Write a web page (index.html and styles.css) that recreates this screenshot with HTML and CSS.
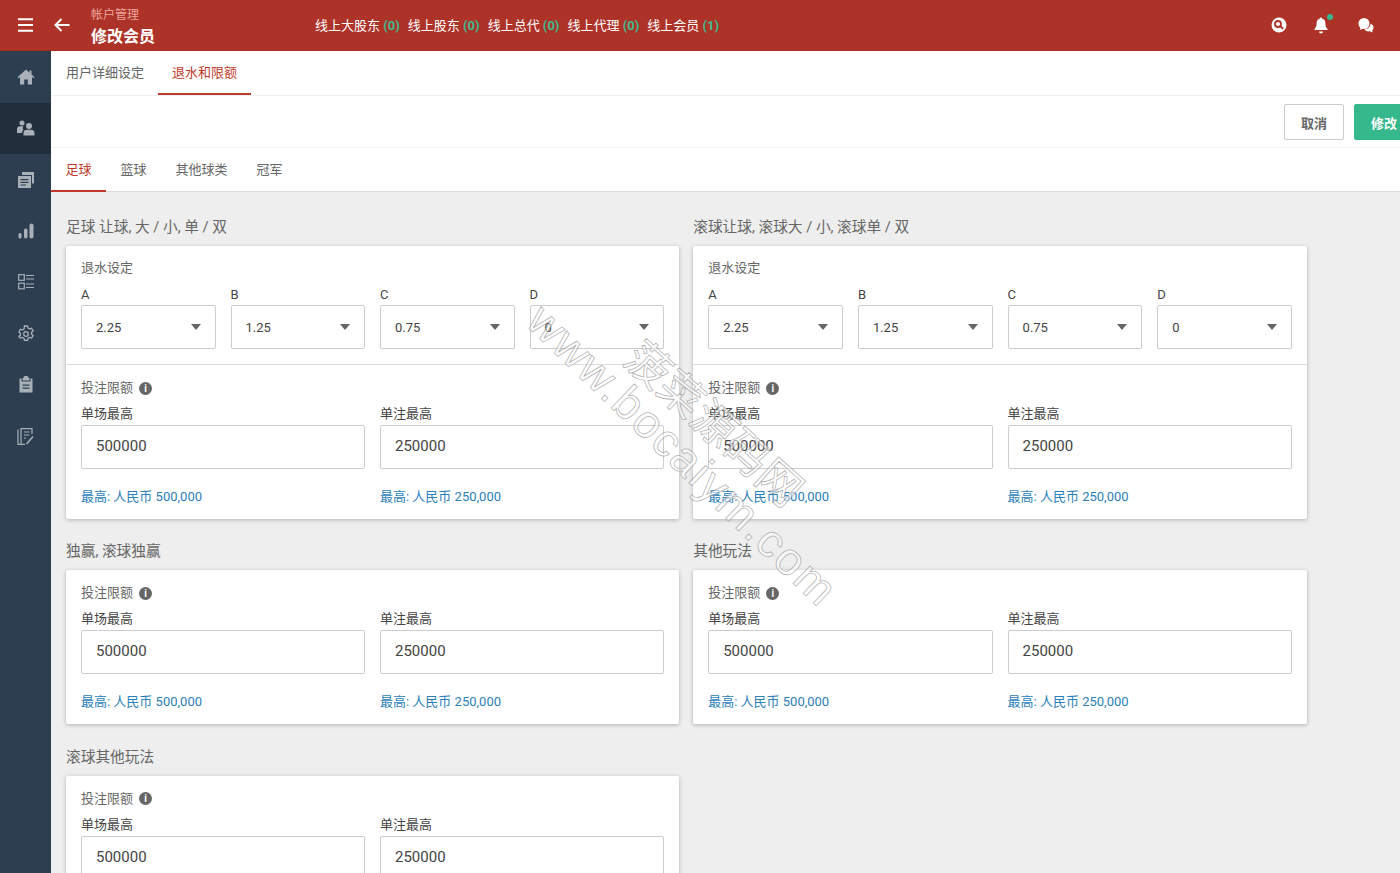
FILE: index.html
```html
<!DOCTYPE html>
<html lang="zh">
<head>
<meta charset="utf-8">
<title>修改会员</title>
<link rel="stylesheet" href="styles.css">
</head>
<body>
<header class="topbar">
  <button class="tb-btn menu" aria-label="menu"><svg width="16" height="14" viewBox="0 0 16 14"><path d="M0 1.2h15M0 7h15M0 12.8h15" stroke="#fff" stroke-width="2"/></svg></button>
  <button class="tb-btn back" aria-label="back"><svg width="16" height="14" viewBox="0 0 16 14"><path d="M15.5 7H2M7.500 1 1.500 7l6 6" stroke="#fff" stroke-width="2" fill="none"/></svg></button>
  <div class="crumb"><div class="crumb-sub">帐户管理</div><div class="crumb-title">修改会员</div></div>
  <nav class="online">
    <span>线上大股东 <b>(0)</b></span><span>线上股东 <b>(0)</b></span><span>线上总代 <b>(0)</b></span><span>线上代理 <b>(0)</b></span><span>线上会员 <b>(1)</b></span>
  </nav>
  <div class="tb-icons">
    <svg width="16" height="16" viewBox="0 0 16 16"><circle cx="8" cy="8" r="7.500" fill="#fff"/><circle cx="7" cy="7" r="3" fill="none" stroke="#ad3228" stroke-width="1.800"/><path d="m9.200 9.200 3 2.600" stroke="#ad3228" stroke-width="2"/></svg>
    <span class="bell"><svg width="14" height="17" viewBox="0 0 14 17"><path d="M7 0.500c.7 0 1 .5 1 1.100 2.500.6 3.400 2.700 3.400 5 0 3 1 4.300 2.100 5.400v.9H.5v-.9c1.100-1.100 2.100-2.400 2.100-5.400 0-2.300.9-4.400 3.400-5 0-.6.300-1.100 1-1.100zM5 14.600h4c0 1.200-.9 1.900-2 1.900s-2-.7-2-1.900z" fill="#fff"/></svg><i class="dot"></i></span>
    <svg class="chat" width="16" height="15" viewBox="0 0 16 15"><circle cx="6" cy="5.500" r="5.500" fill="#fff"/><path d="M2.500 9 2 12l3.500-1.500z" fill="#fff"/><path d="M12.500 5.800c1.900.7 3 2.100 3 3.700 0 1.100-.5 2-1.300 2.700l.5 2.300-2.800-1.200c-2.300.5-4.500-.4-5.400-2.100 3.300.2 6-2.300 6-5.400z" fill="#fff"/></svg>
  </div>
</header>
<div class="shell">
  <aside class="sidebar">
    <a class="side-item"><svg width="18" height="16" viewBox="0 0 18 16"><path d="M9 .5 .5 8.200l1 1L3 8v7.500h4.200v-5h3.600v5H15V8l1.500 1.200 1-1L14.500 5.500V1.500h-2v2.200z"/></svg></a>
    <a class="side-item on"><svg width="18" height="16" viewBox="0 0 18 16"><circle cx="5" cy="3" r="2.500"/><circle cx="12" cy="6" r="3"/><path d="M0 13V9c0-2 1.500-2.800 3-2.800h3.500C5.200 7.200 5.600 9 6.500 10 5.300 10.600 5 11.800 5 13zM6.500 15.500V13c0-2 1.700-3.200 3-3.200h5c1.300 0 3 1.200 3 3.200v2.500z"/></svg></a>
    <a class="side-item"><svg width="16" height="16" viewBox="0 0 16 16"><path d="M4 0h12v11.500h-2V3H4z"/><path d="M0 4h13v12H0zm2.500 3v1.200h8V7zm0 2.700v1.200h8V9.700zm0 2.700v1.200h5.500v-1.200z" fill-rule="evenodd"/></svg></a>
    <a class="side-item"><svg width="16" height="16" viewBox="0 0 16 16"><rect x="0.500" y="10" width="3" height="5.500" rx="1.500"/><rect x="6" y="5.500" width="3.500" height="10" rx="1.700"/><rect x="11.500" y="0.500" width="4" height="15" rx="2"/></svg></a>
    <a class="side-item"><svg width="16" height="16" viewBox="0 0 16 16" fill="none" stroke="currentColor" stroke-width="1.200"><rect x="0.700" y="0.700" width="5.600" height="5.600"/><rect x="0.700" y="9.200" width="5.600" height="5.600"/><path d="M8 1.500h8M8 5h8M8 10h8M8 13.500h8"/></svg></a>
    <a class="side-item"><svg width="16" height="17" viewBox="0 0 16 17" fill="none" stroke="currentColor" stroke-width="1.300"><path d="M6.500 1h3l.5 2 1.600.9 2-.6 1.500 2.600-1.500 1.400v1.800l1.500 1.400-1.500 2.600-2-.6-1.600.9-.5 2h-3l-.5-2-1.600-.9-2 .6L.9 11.500l1.500-1.400V8.300L.9 6.900l1.500-2.600 2 .6L6 4z"/><circle cx="8" cy="9" r="2.300"/></svg></a>
    <a class="side-item"><svg width="14" height="17" viewBox="0 0 14 17"><path d="M4.500 2V1.500C4.500.7 5.200 0 7 0s2.500.7 2.500 1.500V2h1v2.500h-7V2zM.5 2.500h2v3h9v-3h2v14H.5zm3 6v1.300h7V8.500zm0 3v1.300h7v-1.300z" fill-rule="evenodd"/></svg></a>
    <a class="side-item"><svg width="17" height="17" viewBox="0 0 17 17" fill="none" stroke="currentColor" stroke-width="1.200"><path d="M15 6V.7H4v15.600h4M1 1.500v14.800h3M7 4h5.500M7 7h5.500M7 10h2"/><path d="M9.500 16 16 8.500" stroke-width="1.500"/></svg></a>
  </aside>
  <main class="main">
    <div class="tabs">
      <a class="tab">用户详细设定</a><a class="tab active">退水和限额</a>
    </div>
    <div class="actions">
      <button class="btn cancel">取消</button><button class="btn ok">修改</button>
    </div>
    <div class="subtabs">
      <a class="subtab active">足球</a><a class="subtab">篮球</a><a class="subtab">其他球类</a><a class="subtab">冠军</a>
    </div>
    <div class="content">
      <section class="group">
        <h3>足球 让球, 大 / 小, 单 / 双</h3>
        <div class="card">
          <div class="rebate">
            <div class="sec-title">退水设定</div>
            <div class="selects">
              <div><label>A</label><div class="select">2.25<i></i></div></div>
              <div><label>B</label><div class="select">1.25<i></i></div></div>
              <div><label>C</label><div class="select">0.75<i></i></div></div>
              <div><label>D</label><div class="select">0<i></i></div></div>
            </div>
          </div>
          <div class="limits">
            <div class="sec-title">投注限额 <span class="info">i</span></div>
            <div class="fields">
              <div><label>单场最高</label><div class="input">500000</div><p class="hint">最高: 人民币 500,000</p></div>
              <div><label>单注最高</label><div class="input">250000</div><p class="hint">最高: 人民币 250,000</p></div>
            </div>
          </div>
        </div>
      </section>
      <section class="group">
        <h3>滚球让球, 滚球大 / 小, 滚球单 / 双</h3>
        <div class="card">
          <div class="rebate">
            <div class="sec-title">退水设定</div>
            <div class="selects">
              <div><label>A</label><div class="select">2.25<i></i></div></div>
              <div><label>B</label><div class="select">1.25<i></i></div></div>
              <div><label>C</label><div class="select">0.75<i></i></div></div>
              <div><label>D</label><div class="select">0<i></i></div></div>
            </div>
          </div>
          <div class="limits">
            <div class="sec-title">投注限额 <span class="info">i</span></div>
            <div class="fields">
              <div><label>单场最高</label><div class="input">500000</div><p class="hint">最高: 人民币 500,000</p></div>
              <div><label>单注最高</label><div class="input">250000</div><p class="hint">最高: 人民币 250,000</p></div>
            </div>
          </div>
        </div>
      </section>
      <section class="group">
        <h3>独赢, 滚球独赢</h3>
        <div class="card">
          <div class="limits">
            <div class="sec-title">投注限额 <span class="info">i</span></div>
            <div class="fields">
              <div><label>单场最高</label><div class="input">500000</div><p class="hint">最高: 人民币 500,000</p></div>
              <div><label>单注最高</label><div class="input">250000</div><p class="hint">最高: 人民币 250,000</p></div>
            </div>
          </div>
        </div>
      </section>
      <section class="group">
        <h3>其他玩法</h3>
        <div class="card">
          <div class="limits">
            <div class="sec-title">投注限额 <span class="info">i</span></div>
            <div class="fields">
              <div><label>单场最高</label><div class="input">500000</div><p class="hint">最高: 人民币 500,000</p></div>
              <div><label>单注最高</label><div class="input">250000</div><p class="hint">最高: 人民币 250,000</p></div>
            </div>
          </div>
        </div>
      </section>
      <section class="group">
        <h3>滚球其他玩法</h3>
        <div class="card">
          <div class="limits">
            <div class="sec-title">投注限额 <span class="info">i</span></div>
            <div class="fields">
              <div><label>单场最高</label><div class="input">500000</div><p class="hint">最高: 人民币 500,000</p></div>
              <div><label>单注最高</label><div class="input">250000</div><p class="hint">最高: 人民币 250,000</p></div>
            </div>
          </div>
        </div>
      </section>
    </div>
  </main>
</div>
<div class="wm wm-url">www.bocaiym.com</div>
<div class="wm wm-cn">菠菜源码网</div>
</body>
</html>
```
FILE: styles.css
```css
* { box-sizing: border-box; }
html, body { margin: 0; height: 873px; overflow: hidden; }
body { font-family: Roboto, "Noto Sans CJK SC", sans-serif; font-size: 13px; color: #555; background: #eee; }
.topbar { height: 51px; background: #ad3228; border-bottom: 1px solid #a82a20; display: flex; align-items: center; color: #fff; }
.tb-btn { background: none; border: 0; padding: 0; display: flex; }
.menu { margin-left: 18px; }
.back { margin-left: 20px; }
.crumb { margin-left: 21px; margin-top: 4px; width: 224px; }
.crumb-sub { font-size: 12px; line-height: 16px; color: #eda89f; }
.crumb-title { font-size: 16px; line-height: 22px; font-weight: 700; margin-top: 3px; }
.online { display: flex; gap: 8px; font-size: 13px; color: #fff; margin-top: -1px; }
.online b { font-weight: 700; color: #3dba8e; }
.tb-icons { margin-left: auto; margin-right: 26px; display: flex; align-items: center; gap: 28px; }
.tb-icons .chat { margin-left: 2px; }
.bell { position: relative; display: flex; margin-left: -1px; }
.dot { position: absolute; top: -3px; right: -5px; width: 6px; height: 6px; border-radius: 50%; background: #35b98c; }
.shell { display: flex; height: 822px; }
.sidebar { width: 51px; flex: none; background: #2c3e50; color: #a9b0b7; padding-top: .4px; }
.side-item { height: 51.300px; display: flex; align-items: center; justify-content: center; color: #a9b0b7; }
.side-item svg { fill: currentColor; }
.side-item svg[fill="none"] { fill: none; }
.side-item.on { background: #212f3d; }
.main { flex: 1; min-width: 0; display: flex; flex-direction: column; }
.tabs { height: 45px; background: #fff; border-bottom: 1px solid #eee; display: flex; padding-left: 1px; font-size: 13px; }
.tab { padding: 11px 14px 0; height: 44px; color: #666; }
.tab.active { color: #c0392b; border-bottom: 2px solid #c0392b; }
.actions { height: 52px; background: #fff; border-bottom: 1px solid #eee; display: flex; justify-content: flex-end; align-items: center; gap: 10px; margin-right: -14px; padding-top: 1px; }
.btn { height: 36px; width: 60px; border-radius: 2px; font: 700 13px Roboto, "Noto Sans CJK SC", sans-serif; }
.cancel { background: #fff; border: 1px solid #ccc; color: #666; }
.ok { background: #35b98c; border: 1px solid #35b98c; color: #fff; }
.subtabs { height: 44px; background: #fff; border-bottom: 1px solid #ddd; display: flex; font-size: 13px; }
.subtab { padding: 11px 14.500px 0; height: 44px; color: #666; }
.subtab.active { color: #c0392b; border-bottom: 2px solid #c0392b; }
.content { flex: 1; display: grid; grid-template-columns: 613px 613.800px; column-gap: 14.200px; align-content: start; padding: 24px 0 0 15px; overflow: hidden; }
.group h3 { margin: 0; height: 30px; font-size: 14.700px; line-height: 22px; font-weight: 400; color: #666; }
.card { background: #fff; border-radius: 2px; box-shadow: 0 1px 4px rgba(0,0,0,.25); margin-bottom: 21.300px; }
.rebate { padding: 14px 15px 15px; border-bottom: 1px solid #ddd; }
.sec-title { font-size: 13px; line-height: 16px; color: #666; display: flex; align-items: center; gap: 5px; }
.selects { display: grid; grid-template-columns: repeat(4, 1fr); column-gap: 15px; margin-top: 11px; }
label { display: block; font-size: 13px; line-height: 16px; color: #444; margin-bottom: 2px; }
.select { position: relative; height: 44px; border: 1px solid #ccc; border-radius: 2px; padding-left: 14px; line-height: 43px; font-size: 13px; color: #444; }
.select i { position: absolute; right: 14px; top: 18px; border: 5.500px solid transparent; border-top: 6px solid #666; border-bottom: 0; }
.limits { padding: 15px 15px 14px; }
.info { width: 13px; height: 13px; border-radius: 50%; background: #666; color: #fff; font-size: 10px; font-weight: 700; line-height: 13px; text-align: center; margin-left: 1px; }
.fields { display: grid; grid-template-columns: 1fr 1fr; column-gap: 15px; margin-top: 10px; }
.fields label { margin-bottom: 3px; }
.input { height: 44px; border: 1px solid #ccc; border-radius: 2px; padding-left: 14px; line-height: 41px; font-size: 15px; color: #444; }
.hint { margin: 20px 0 0; font-size: 13px; line-height: 16px; color: #2a80b9; }
.wm { position: absolute; color: rgba(255,255,255,.55); -webkit-text-stroke: .8px rgba(130,130,130,.6); white-space: nowrap; transform-origin: left top; pointer-events: none; }
.wm-url { left: 554px; top: 293px; font: 46px "Liberation Sans", sans-serif; letter-spacing: 2px; transform: rotate(44deg); }
.wm-cn { left: 656px; top: 324px; font: 44px "Noto Sans CJK SC", sans-serif; transform: rotate(42deg); }
```
